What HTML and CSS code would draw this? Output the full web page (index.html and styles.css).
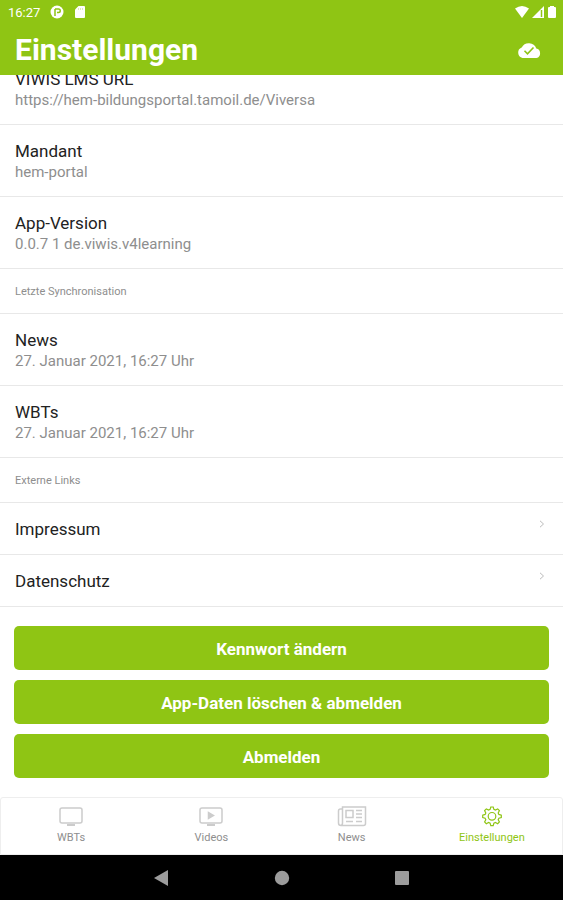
FILE: index.html
```html
<!DOCTYPE html>
<html lang="de">
<head>
  <meta charset="UTF-8" />
  <meta name="viewport" content="width=device-width, initial-scale=1.0"/>
  <title>Einstellungen</title>
  <link rel="stylesheet" href="styles.css">
</head>
<body>

  <header class="header">
    <div class="status">
      <span>16:27</span>
      <svg width="14" height="14" viewBox="0 0 14 14">
        <circle cx="7" cy="7" r="6.500" fill="#fff"/>
        <path d="M5 11V4M5 4h3.500a1.700 1.700 0 0 1 0 3.500H7" fill="none" stroke="#8fc514" stroke-width="1.500"/>
      </svg>
      <svg width="12" height="14" viewBox="0 0 12 14">
        <path d="M4.500 1H10a1 1 0 0 1 1 1v10a1 1 0 0 1-1 1H2a1 1 0 0 1-1-1V4.500z" fill="#fff"/>
        <path d="M4.500 3v2M6.500 3v2M8.500 3v2" stroke="#d3e9a3" stroke-width="0.800"/>
      </svg>
      <div class="signals">
        <svg width="14" height="14" viewBox="0 0 14 14">
          <path d="M0 3.500Q7-1.500 14 3.500L7 13z" fill="#fff"/>
        </svg>
        <svg width="14" height="14" viewBox="0 0 14 14">
          <path d="M13 1v12H1z" fill="#fff"/>
          <path d="M10.500 5v7" stroke="#8fc514" stroke-width="1.500"/>
        </svg>
        <svg width="10" height="14" viewBox="0 0 10 14">
          <path d="M3 1h4v1h1a1 1 0 0 1 1 1v9a1 1 0 0 1-1 1H2a1 1 0 0 1-1-1V3a1 1 0 0 1 1-1h1z" fill="#fff"/>
        </svg>
      </div>
    </div>
    <div class="title-bar">
      <h1>Einstellungen</h1>
      <svg width="26" height="18" viewBox="0 0 26 18">
        <path d="M6.500 17a5.500 5.500 0 0 1-.8-10.500 8 8 0 0 1 14.600 1A4.900 4.900 0 0 1 20.500 17z" fill="#fff"/>
        <path d="M8.500 9.800l3 3 6-6.300" fill="none" stroke="#8fc514" stroke-width="1.600"/>
      </svg>
    </div>
  </header>

  <main class="content">
    <div class="row">
      <h2>VIWIS LMS URL</h2>
      <p>https://hem-bildungsportal.tamoil.de/Viversa</p>
    </div>
    <div class="row">
      <h2>Mandant</h2>
      <p>hem-portal</p>
    </div>
    <div class="row">
      <h2>App-Version</h2>
      <p>0.0.7 1 de.viwis.v4learning</p>
    </div>

    <div class="section">Letzte Synchronisation</div>
    <div class="row">
      <h2>News</h2>
      <p>27. Januar 2021, 16:27 Uhr</p>
    </div>
    <div class="row">
      <h2>WBTs</h2>
      <p>27. Januar 2021, 16:27 Uhr</p>
    </div>

    <div class="section">Externe Links</div>
    <a class="link" href="#impressum">
      Impressum
      <svg width="6" height="8" viewBox="0 0 6 8"><path d="M1 .8L4.500 4 1 7.200"/></svg>
    </a>
    <a class="link" href="#datenschutz">
      Datenschutz
      <svg width="6" height="8" viewBox="0 0 6 8"><path d="M1 .8L4.500 4 1 7.200"/></svg>
    </a>

    <div class="actions">
      <button type="button">Kennwort ändern</button>
      <button type="button">App-Daten löschen &amp; abmelden</button>
      <button type="button">Abmelden</button>
    </div>
  </main>

  <nav class="tabs">
    <a href="#wbts">
      <svg width="30" height="22" viewBox="0 0 30 22">
        <rect x="4" y="3" width="22" height="15" rx="2"/>
        <path d="M11 20h8" stroke-width="2"/>
      </svg>
      WBTs
    </a>
    <a href="#videos">
      <svg width="30" height="22" viewBox="0 0 30 22">
        <rect x="4" y="3" width="22" height="15" rx="2"/>
        <path d="M11 20h8" stroke-width="2"/>
        <path d="M12.500 7.500v6l5-3z" fill="#ccc"/>
      </svg>
      Videos
    </a>
    <a href="#news">
      <svg width="30" height="22" viewBox="0 0 30 22">
        <path d="M5.500 4H3.500Q1.500 4 1.500 6v12q0 2.500 2.500 2.500h22.500q2 0 2-2V2H5.500v16q0 2.500-2 2.500"/>
        <rect x="9" y="5.500" width="7" height="7"/>
        <path d="M19 5.500h6M19 9h6M19 12.500h6M9 16.500h7M19 16.500h6"/>
      </svg>
      News
    </a>
    <a class="active" href="#einstellungen">
      <svg width="30" height="22" viewBox="0 0 30 22">
        <path d="M13.800 2h2.400l.7 2.400 1.500.7 2.300-1.200 1.700 1.700-1.200 2.300.7 1.500 2.400.7v2.400l-2.400.7-.7 1.500 1.200 2.300-1.700 1.700-2.300-1.200-1.500.7-.7 2.400h-2.400l-.7-2.400-1.500-.7-2.300 1.200L7.600 17l1.200-2.300-.7-1.500-2.400-.7v-2.400l2.400-.7.7-1.500-1.200-2.300 1.700-1.700 2.300 1.200 1.500-.7z"/>
        <circle cx="15" cy="11.300" r="3.800"/>
      </svg>
      Einstellungen
    </a>
  </nav>

  <div class="system-nav">
    <button type="button" aria-label="Zurück">
      <svg width="16" height="16" viewBox="0 0 16 16"><path d="M14 0v16L0 8z"/></svg>
    </button>
    <button type="button" aria-label="Startseite">
      <svg width="16" height="16" viewBox="0 0 16 16"><circle cx="8" cy="8" r="7.200"/></svg>
    </button>
    <button type="button" aria-label="Übersicht">
      <svg width="16" height="16" viewBox="0 0 16 16"><rect x="1" y="1" width="14" height="14" rx="1"/></svg>
    </button>
  </div>

</body>
</html>
```
FILE: styles.css
```css
* {
  box-sizing: border-box;
}

body {
  margin: 0;
  height: 100vh;
  display: flex;
  flex-direction: column;
  background-color: #fff;
  font-family: Roboto, sans-serif;
  color: #222;
}

h1, h2, p {
  margin: 0;
}

a {
  color: inherit;
  text-decoration: none;
}

svg {
  display: block;
}

.header {
  flex: none;
  height: 75px;
  background-color: #8fc514;
  color: #fff;
}

.status {
  height: 24px;
  padding: 0 6px 0 8px;
  display: flex;
  align-items: center;
  gap: 10px;
  font-size: 13px;
}

.signals {
  margin-left: auto;
  display: flex;
  gap: 2px;
}

.title-bar {
  height: 51px;
  padding: 0 21px 0 15px;
  display: flex;
  align-items: center;
  justify-content: space-between;
}

h1 {
  font-size: 30px;
  line-height: 36px;
}

/* scrolled to the end, the first row slides under the header */
.content {
  flex: 1;
  min-height: 0;
  overflow: hidden;
  display: flex;
  flex-direction: column;
  justify-content: flex-end;
}

.row, .section, .link {
  flex: none;
  padding: 0 15px;
  border-bottom: 1px solid #e8e8e8;
}

.row {
  height: 72px;
  padding-top: 15px;
}

.row h2 {
  font-size: 17px;
  font-weight: 400;
  line-height: 22px;
}

.row p {
  font-size: 15px;
  line-height: 20px;
  color: #8e8e8e;
}

.section {
  height: 45px;
  font-size: 11px;
  line-height: 45px;
  color: #8e8e8e;
}

.link {
  height: 52px;
  padding-right: 18px;
  display: flex;
  justify-content: space-between;
  font-size: 17px;
  line-height: 52px;
}

.link svg {
  margin-top: 17px;
  fill: none;
  stroke: #bbb;
}

.actions {
  flex: none;
  padding: 19px 14px;
  display: flex;
  flex-direction: column;
  gap: 10px;
}

.actions button {
  height: 44px;
  padding: 2px 0 0;
  border: none;
  border-radius: 5px;
  background-color: #8fc514;
  color: #fff;
  font: bold 17px Roboto, sans-serif;
  cursor: pointer;
}

.tabs {
  flex: none;
  height: 58px;
  padding-top: 7px;
  display: flex;
  border: 1px solid #eee;
  border-radius: 3px 3px 0 0;
}

.tabs a {
  flex: 1;
  display: flex;
  flex-direction: column;
  align-items: center;
  gap: 4px;
  font-size: 11px;
  line-height: 14px;
  color: #8e8e8e;
}

.tabs svg {
  fill: none;
  stroke: #ccc;
  stroke-width: 1.5;
}

.tabs .active {
  color: #8fc514;
}

.tabs .active svg {
  stroke: #8fc514;
  stroke-width: 1.2;
}

.system-nav {
  flex: none;
  height: 45px;
  display: flex;
  align-items: center;
  justify-content: center;
  gap: 104px;
  background-color: #000;
}

.system-nav button {
  padding: 0;
  border: none;
  background: none;
}

.system-nav svg {
  fill: #9c9c9c;
}
```
